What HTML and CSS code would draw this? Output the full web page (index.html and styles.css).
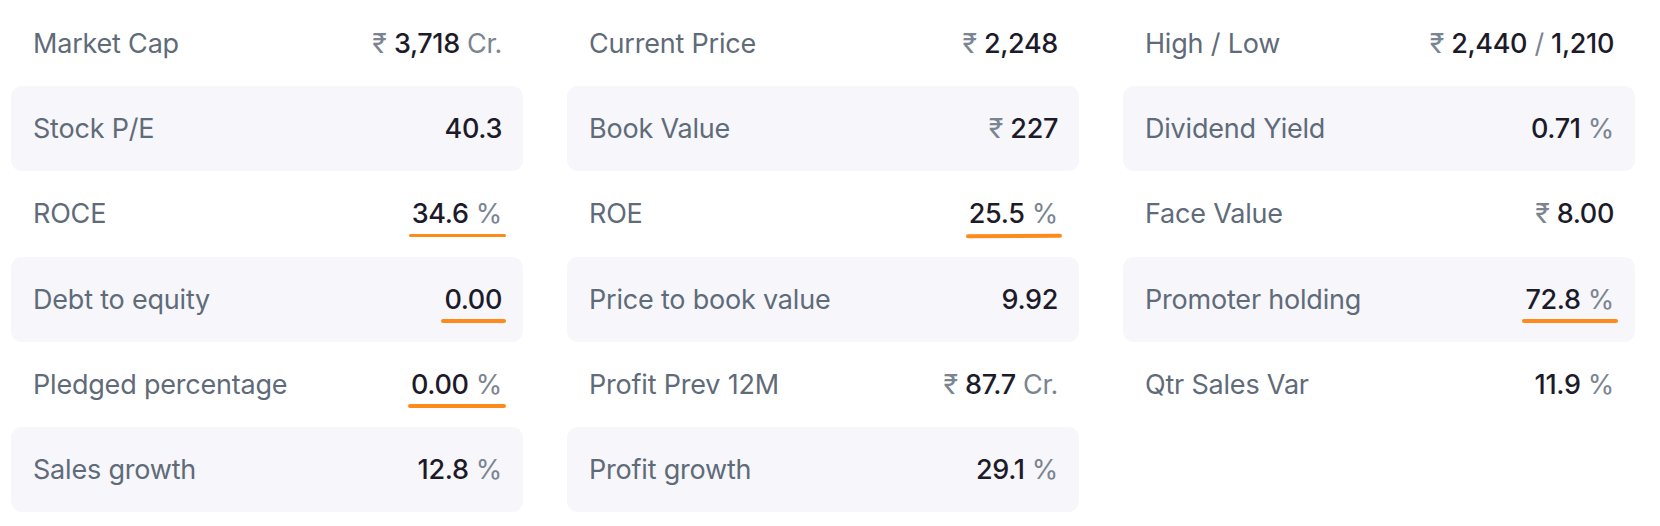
FILE: index.html
```html
<!DOCTYPE html>
<html lang="en">
<head>
<meta charset="utf-8">
<title>Ratios</title>
<link rel="stylesheet" href="styles.css">
</head>
<body>
<div class="ratios">
  <ul class="col">
    <li class="row"><span class="name">Market Cap</span><span class="value"><span class="unit">₹</span> <span class="num">3,718</span> <span class="unit">Cr.</span></span></li>
    <li class="row shaded"><span class="name">Stock P/E</span><span class="value"><span class="num">40.3</span></span></li>
    <li class="row"><span class="name">ROCE</span><span class="value mark"><span class="num">34.6</span> <span class="unit">%</span></span></li>
    <li class="row shaded"><span class="name">Debt to equity</span><span class="value mark"><span class="num">0.00</span></span></li>
    <li class="row"><span class="name">Pledged percentage</span><span class="value mark"><span class="num">0.00</span> <span class="unit">%</span></span></li>
    <li class="row shaded"><span class="name">Sales growth</span><span class="value"><span class="num">12.8</span> <span class="unit">%</span></span></li>
  </ul>
  <ul class="col">
    <li class="row"><span class="name">Current Price</span><span class="value"><span class="unit">₹</span> <span class="num">2,248</span></span></li>
    <li class="row shaded"><span class="name">Book Value</span><span class="value"><span class="unit">₹</span> <span class="num">227</span></span></li>
    <li class="row"><span class="name">ROE</span><span class="value mark tilt"><span class="num">25.5</span> <span class="unit">%</span></span></li>
    <li class="row shaded"><span class="name">Price to book value</span><span class="value"><span class="num">9.92</span></span></li>
    <li class="row"><span class="name">Profit Prev 12M</span><span class="value"><span class="unit">₹</span> <span class="num">87.7</span> <span class="unit">Cr.</span></span></li>
    <li class="row shaded"><span class="name">Profit growth</span><span class="value"><span class="num">29.1</span> <span class="unit">%</span></span></li>
  </ul>
  <ul class="col">
    <li class="row"><span class="name">High / Low</span><span class="value"><span class="unit">₹</span> <span class="num">2,440</span> <span class="unit">/</span> <span class="num">1,210</span></span></li>
    <li class="row shaded"><span class="name">Dividend Yield</span><span class="value"><span class="num">0.71</span> <span class="unit">%</span></span></li>
    <li class="row"><span class="name">Face Value</span><span class="value"><span class="unit">₹</span> <span class="num">8.00</span></span></li>
    <li class="row shaded"><span class="name">Promoter holding</span><span class="value mark"><span class="num">72.8</span> <span class="unit">%</span></span></li>
    <li class="row"><span class="name">Qtr Sales Var</span><span class="value"><span class="num">11.9</span> <span class="unit">%</span></span></li>
  </ul>
</div>
</body>
</html>
```
FILE: styles.css
```css
* {
  box-sizing: border-box;
}

html, body {
  margin: 0;
  padding: 0;
  background: #ffffff;
}

body {
  font-family: Inter, "Noto Sans", "DejaVu Sans", sans-serif;
  font-size: 27px;
  color: #5f6b79;
}

.ratios {
  display: grid;
  grid-template-columns: repeat(3, 512px);
  column-gap: 44px;
  padding: 1px 0 0 11px;
}

.col {
  list-style: none;
  margin: 0;
  padding: 0;
  display: flex;
  flex-direction: column;
}

.row {
  height: 85.2px;
  display: flex;
  align-items: center;
  justify-content: space-between;
  padding: 0 21px 0 22px;
  border-radius: 11px;
}

.row.shaded {
  background: #f6f6fb;
}

.name {
  color: #5f6b79;
  font-weight: 400;
  line-height: 1;
  letter-spacing: -0.2px;
}

.value {
  position: relative;
  display: inline-block;
  line-height: 1;
  white-space: nowrap;
  letter-spacing: -0.35px;
}

.num {
  color: #1d1b2a;
  font-weight: 500;
}

.unit {
  color: #7b8591;
  font-weight: 400;
}

.value.mark::after {
  content: "";
  position: absolute;
  left: -3px;
  right: -4px;
  bottom: -10px;
  height: 3.5px;
  border-radius: 2px;
  background: #ff8a1c;
}

.value.tilt::after {
  transform: rotate(-0.4deg);
}
```
